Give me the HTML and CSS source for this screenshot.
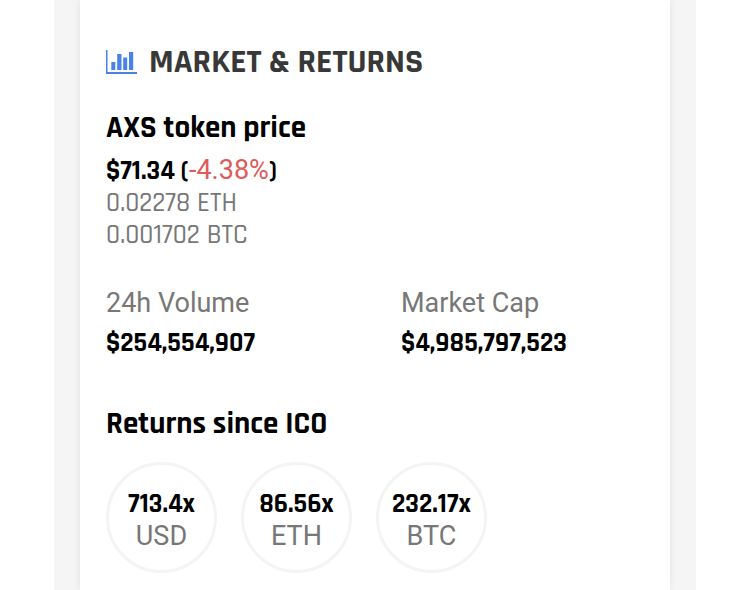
FILE: index.html
```html
<!DOCTYPE html>
<html lang="en">
<head>
<meta charset="utf-8">
<meta name="viewport" content="width=device-width, initial-scale=1">
<title>Market &amp; Returns</title>
<link rel="stylesheet" href="styles.css">
</head>
<body>
<main class="page">
  <section class="card">
    <header class="card-header">
      <svg class="chart-icon" viewBox="0 0 32 24" aria-hidden="true">
        <path d="M0 0h1.5v22H31v2H0z"/>
        <path d="M5.3 12h4v8h-4zM11.2 4h4.3v16h-4.3zM17.2 7.6h4V20h-4zM23 2h4.2v18H23z"/>
      </svg>
      <h1 class="card-title">Market &amp; Returns</h1>
    </header>

    <h2 class="subtitle">AXS token price</h2>
    <p class="price">$71.34 (<span class="change">-4.38%</span>)</p>
    <p class="converted">0.02278 ETH</p>
    <p class="converted">0.001702 BTC</p>

    <dl class="stats">
      <div class="stat">
        <dt class="label">24h Volume</dt>
        <dd class="value">$254,554,907</dd>
      </div>
      <div class="stat">
        <dt class="label">Market Cap</dt>
        <dd class="value">$4,985,797,523</dd>
      </div>
    </dl>

    <h2 class="subtitle">Returns since ICO</h2>
    <ul class="returns">
      <li class="return"><strong class="multiple">713.4x</strong><span class="unit">USD</span></li>
      <li class="return"><strong class="multiple">86.56x</strong><span class="unit">ETH</span></li>
      <li class="return"><strong class="multiple">232.17x</strong><span class="unit">BTC</span></li>
    </ul>
  </section>
</main>
</body>
</html>
```
FILE: styles.css
```css
* {
  box-sizing: border-box;
  margin: 0;
  padding: 0;
}

body {
  background: #fff;
  color: #000;
  font-family: Rajdhani, Roboto, sans-serif;
}

.page {
  min-height: 100vh;
  margin: 0 54px;
  padding: 0 26px;
  background: #f5f5f5;
}

.card {
  min-height: 100vh;
  padding: 42px 26px 16px;
  background: #fff;
  box-shadow: 0 0 8px rgba(0, 0, 0, 0.08);
}

.card-header {
  display: flex;
  align-items: center;
  gap: 11px;
  margin-bottom: 28px;
}

.chart-icon {
  width: 32px;
  height: 24px;
  fill: #4a83e8;
}

.card-title {
  color: #383838;
  font-size: 34px;
  line-height: 40px;
  text-transform: uppercase;
}

.subtitle {
  font-size: 31px;
  line-height: 36px;
}

.price {
  margin-top: 8px;
  font-size: 27px;
  font-weight: 700;
  line-height: 32px;
}

.change {
  color: #e05a5a;
  font-family: Roboto, sans-serif;
  font-size: 27px;
  font-weight: 400;
}

.converted {
  color: #777;
  font-size: 27px;
  font-weight: 500;
  line-height: 32px;
}

.stats {
  display: grid;
  grid-template-columns: 1fr 1fr;
  margin: 34px -26px 45px;
}

.stat {
  padding: 0 26px;
}

.label,
.unit {
  color: #777;
  font-family: Roboto, sans-serif;
  font-size: 27px;
}

.label {
  line-height: 36px;
}

.value {
  margin-top: 4px;
  font-size: 27px;
  font-weight: 700;
  line-height: 36px;
}

.returns {
  display: flex;
  gap: 24px;
  margin-top: 20px;
  list-style: none;
}

.return {
  display: flex;
  flex-direction: column;
  align-items: center;
  justify-content: center;
  width: 111px;
  height: 111px;
  padding-top: 4px;
  border: 3px solid #f4f4f4;
  border-radius: 50%;
}

.multiple {
  font-size: 27px;
  line-height: 32px;
}

.unit {
  line-height: 32px;
}
```
